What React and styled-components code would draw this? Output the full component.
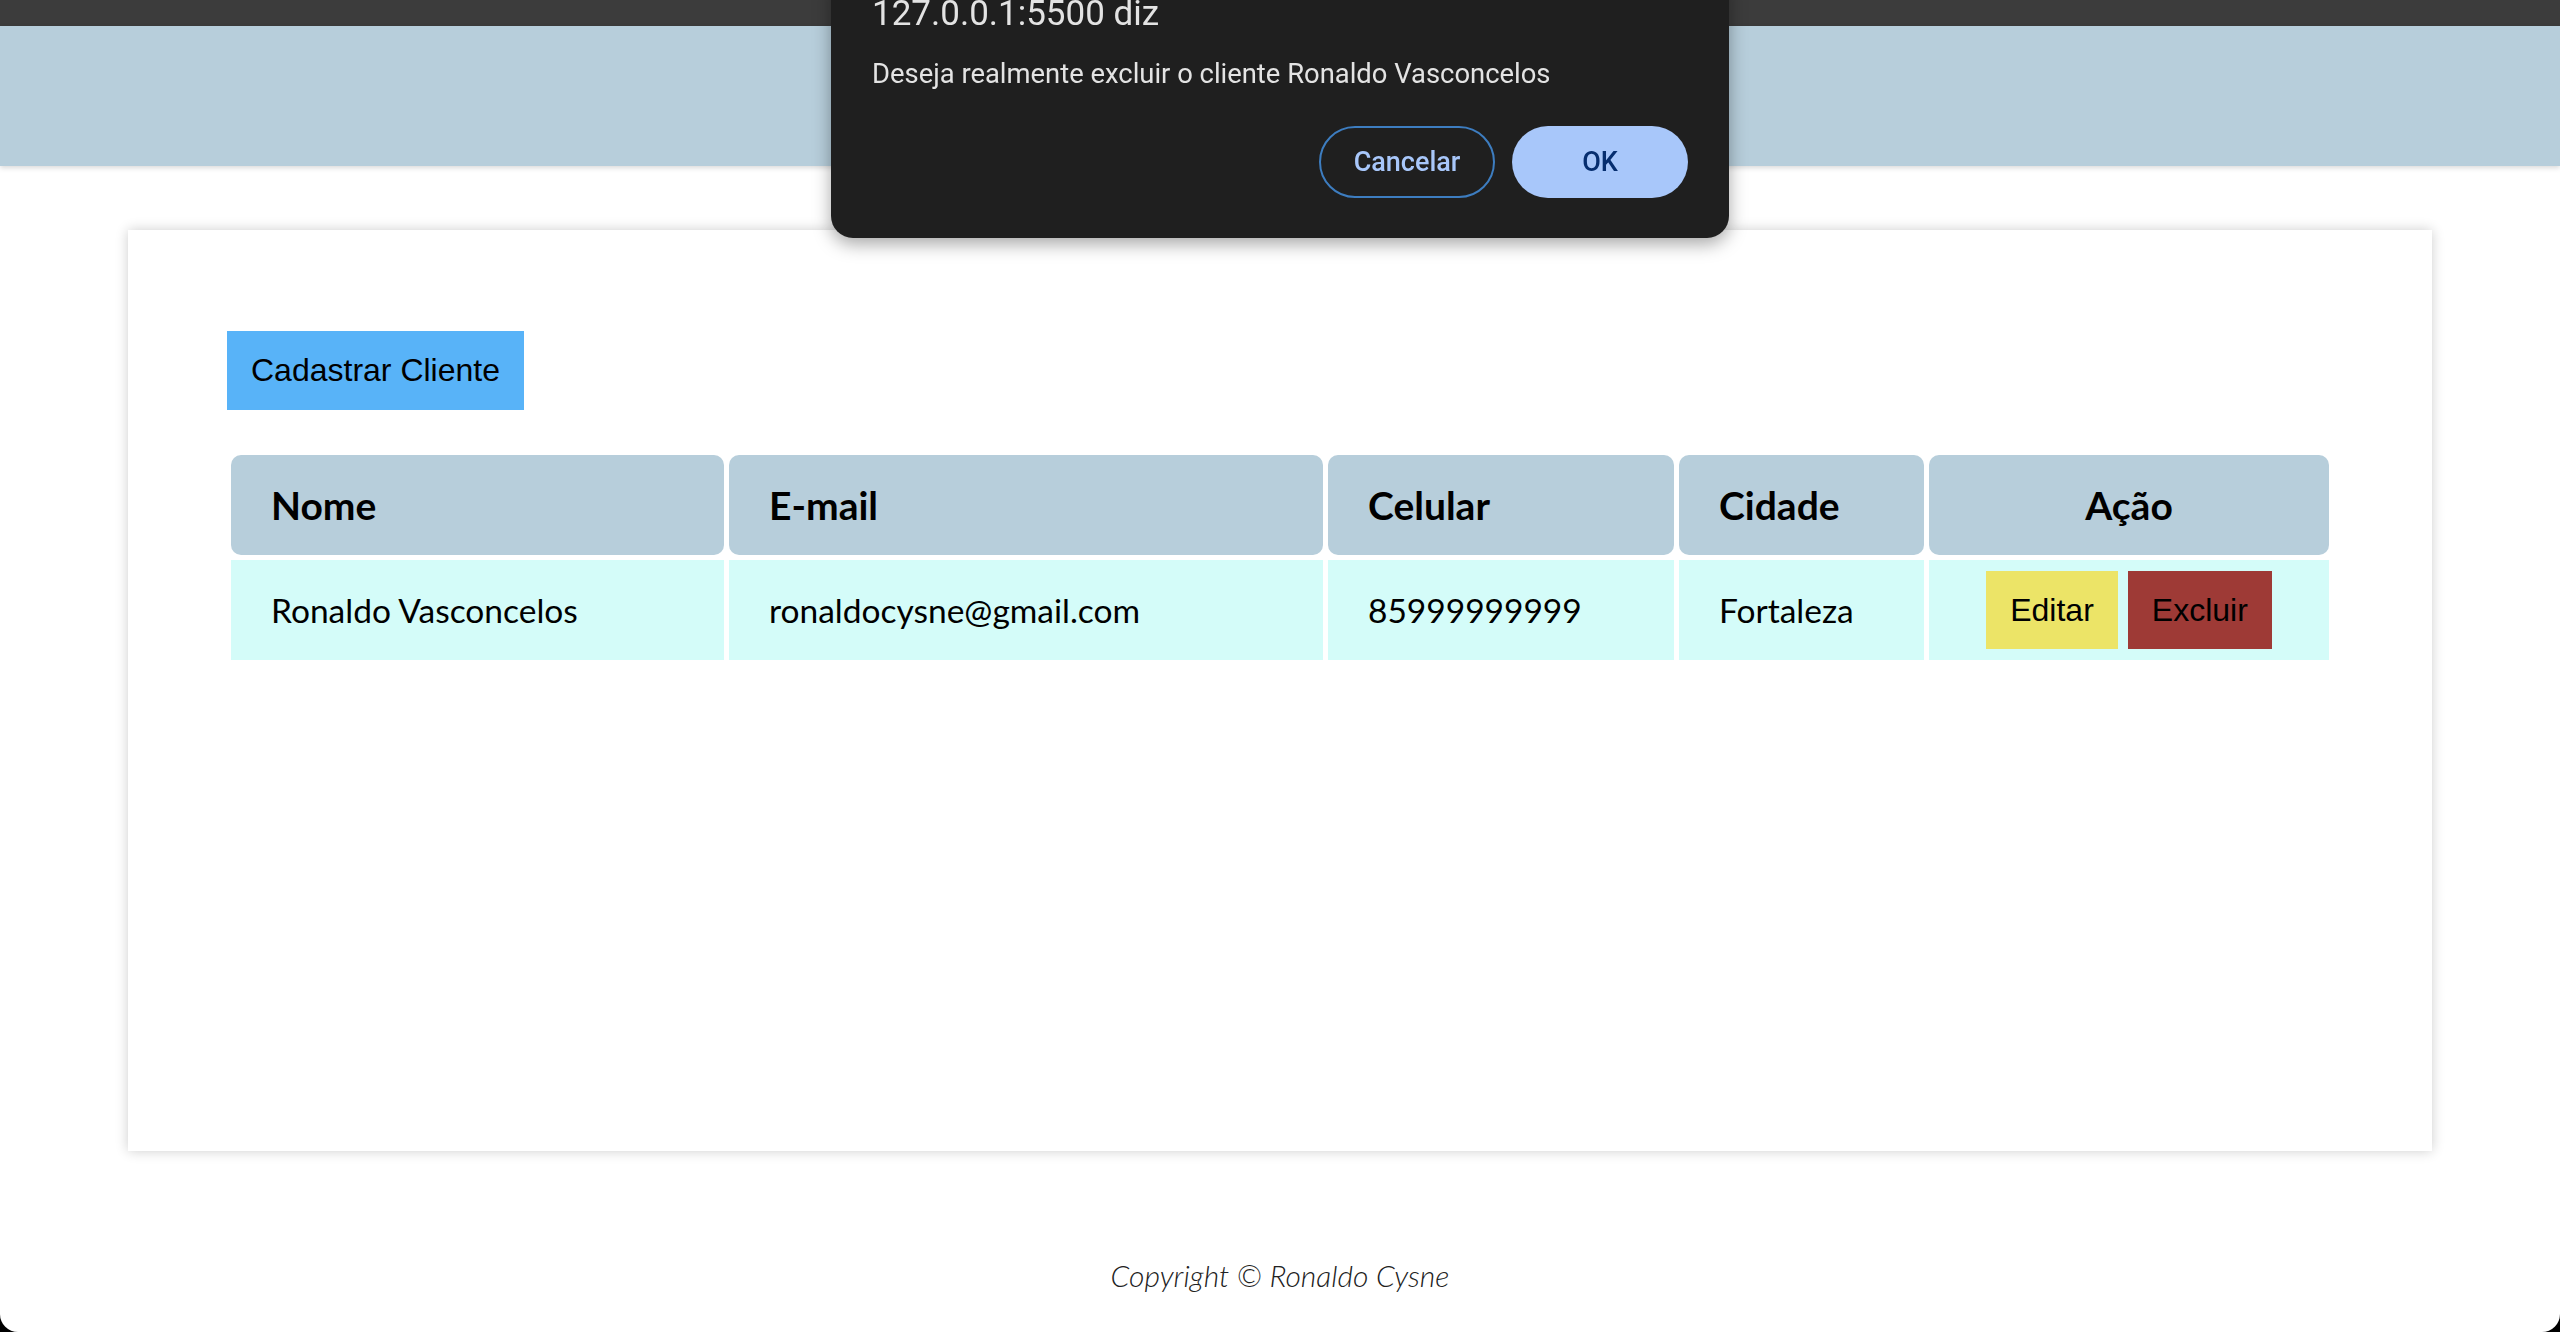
import styled, { createGlobalStyle, css } from "styled-components";

const GlobalStyle = createGlobalStyle`
  html, body {
    margin: 0;
    padding: 0;
    background: #000;
  }

  * {
    box-sizing: border-box;
  }
`;

export const Page = styled.div`
  min-height: 100vh;
  background: #fff;
  border-radius: 0 0 18px 18px;
  overflow: hidden;
  font-family: Lato, "Noto Sans", sans-serif;
  color: #000;
`;

export const TopBar = styled.div`
  height: 26px;
  background: #3c3c3c;
`;

export const Header = styled.header`
  height: 140px;
  background: #b7cedb;
  box-shadow: 0 2px 5px rgba(0, 0, 0, 0.15);
`;

export const Card = styled.main`
  width: 90%;
  height: 921px;
  margin: 64px auto 0;
  padding: 101px 98px;
  background: #fff;
  box-shadow: 0 0 12px rgba(0, 0, 0, 0.2);
`;

const flatButton = css`
  border: none;
  padding: 0 24px;
  height: 78px;
  font-family: "Liberation Sans", Arial, sans-serif;
  font-size: 32px;
  color: #000;
  cursor: pointer;
`;

export const AddButton = styled.button`
  ${flatButton}
  height: 79px;
  margin-left: 1px;
  background: #58b3f8;
`;

export const Table = styled.table`
  width: 100%;
  margin-top: 40px;
  border-collapse: separate;
  border-spacing: 5px;
  table-layout: fixed;
`;

export const HeadCell = styled.th`
  height: 100px;
  padding: 0 40px;
  background: #b7cedb;
  border-radius: 10px;
  font-size: 39px;
  font-weight: 700;
  text-align: ${(props) => (props.center ? "center" : "left")};
`;

export const Cell = styled.td`
  height: 100px;
  padding: 0 40px;
  background: #d4fcf9;
  font-size: 33.5px;
  white-space: nowrap;
`;

export const Actions = styled.div`
  display: flex;
  justify-content: center;
  gap: 10px;
`;

export const ActionButton = styled.button`
  ${flatButton}
  background: ${(props) => (props.danger ? "#9e3a36" : "#ece467")};
`;

export const Footer = styled.footer`
  margin-top: 106px;
  text-align: center;
  font-size: 30px;
  font-style: italic;
  font-weight: 300;
  line-height: 36px;
  color: #222;
`;

// janela de confirmação do navegador (window.confirm)
export const Dialog = styled.div`
  position: fixed;
  top: -30px;
  left: 50%;
  transform: translateX(-50%);
  width: 898px;
  padding: 26px 41px 40px;
  background: #1f1f1f;
  border-radius: 22px;
  box-shadow: 0 6px 18px rgba(0, 0, 0, 0.35);
  font-family: Roboto, "Noto Sans", sans-serif;
  color: #e3e3e3;
`;

export const DialogTitle = styled.div`
  font-size: 35px;
  line-height: 36px;
`;

export const DialogText = styled.div`
  margin-top: 26px;
  font-size: 27.4px;
  line-height: 32px;
`;

export const DialogButtons = styled.div`
  display: flex;
  justify-content: flex-end;
  gap: 17px;
  margin-top: 36px;
`;

export const DialogButton = styled.button`
  width: 176px;
  height: 72px;
  border-radius: 36px;
  font-family: Roboto, sans-serif;
  font-size: 27px;
  font-weight: 500;
  cursor: pointer;

  ${(props) =>
    props.primary
      ? css`
          border: none;
          background: #a8c7fa;
          color: #062e6f;
        `
      : css`
          border: 2px solid #3d7dc0;
          background: transparent;
          color: #a8c7fa;
        `}
`;

const columns = [
  { label: "Nome", width: 493 },
  { label: "E-mail", width: 594 },
  { label: "Celular", width: 346 },
  { label: "Cidade", width: 245 },
  { label: "Ação", width: 400, center: true },
];

const clientes = [
  {
    nome: "Ronaldo Vasconcelos",
    email: "ronaldocysne@gmail.com",
    celular: "85999999999",
    cidade: "Fortaleza",
  },
];

const App = () => {
  return (
    <>
      <GlobalStyle />
      <Page>
        <TopBar />
        <Header />
        <Card>
          <AddButton>Cadastrar Cliente</AddButton>
          <Table>
            <colgroup>
              {columns.map((col) => (
                <col key={col.label} style={{ width: col.width }} />
              ))}
            </colgroup>
            <thead>
              <tr>
                {columns.map((col) => (
                  <HeadCell key={col.label} center={col.center}>
                    {col.label}
                  </HeadCell>
                ))}
              </tr>
            </thead>
            <tbody>
              {clientes.map((c) => (
                <tr key={c.email}>
                  <Cell>{c.nome}</Cell>
                  <Cell>{c.email}</Cell>
                  <Cell>{c.celular}</Cell>
                  <Cell>{c.cidade}</Cell>
                  <Cell>
                    <Actions>
                      <ActionButton>Editar</ActionButton>
                      <ActionButton danger>Excluir</ActionButton>
                    </Actions>
                  </Cell>
                </tr>
              ))}
            </tbody>
          </Table>
        </Card>
        <Footer>Copyright © Ronaldo Cysne</Footer>
      </Page>
      <Dialog>
        <DialogTitle>127.0.0.1:5500 diz</DialogTitle>
        <DialogText>Deseja realmente excluir o cliente Ronaldo Vasconcelos</DialogText>
        <DialogButtons>
          <DialogButton>Cancelar</DialogButton>
          <DialogButton primary>OK</DialogButton>
        </DialogButtons>
      </Dialog>
    </>
  );
};

export default App;
